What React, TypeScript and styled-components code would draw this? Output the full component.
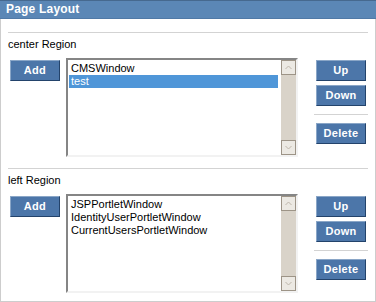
import React from "react";
import styled, { createGlobalStyle } from "styled-components";

const GlobalStyle = createGlobalStyle`
  html, body { margin: 0; padding: 0; background: #ffffff; }
  body { font-family: "Liberation Sans", Arial, sans-serif; }
  * { box-sizing: border-box; }
`;

const Panel = styled.div`
  width: 376px;
  height: 302px;
  display: flex;
  flex-direction: column;
  background: #ffffff;
`;

const Header = styled.div`
  height: 19px;
  flex: none;
  background: #5b87b6;
  border-top: 1px solid #46698f;
  border-bottom: 1px solid #5079a6;
  padding-left: 6px;
  color: #ffffff;
  font-size: 12px;
  font-weight: bold;
  line-height: 17px;
  letter-spacing: 0.2px;
`;

const Body = styled.div`
  flex: 1;
  border: 1px solid #cdcdcd;
  border-top: none;
  padding: 13px 7px 0 7px;
  display: flex;
  flex-direction: column;
`;

const Section = styled.div`
  display: flex;
  flex-direction: column;
  & + & {
    margin-top: 11px;
  }
`;

const Rule = styled.div<{ $gap?: number }>`
  height: 1px;
  background: #d3d3d3;
  margin: ${(p) => (p.$gap ? `${p.$gap}px 0` : "0")};
`;

const RegionTitle = styled.div`
  margin-top: 4px;
  height: 14px;
  font-size: 11px;
  line-height: 14px;
  color: #000000;
`;

const Row = styled.div`
  margin-top: 7px;
  display: flex;
  align-items: flex-start;
`;

const LeftCol = styled.div`
  width: 52px;
  margin-right: 6px;
  padding: 2px 0 0 2px;
`;

const RightCol = styled.div`
  width: 54px;
  margin-left: 16px;
  padding-top: 2px;
  display: flex;
  flex-direction: column;
  align-items: center;
`;

const ActionButton = styled.button<{ $top?: number }>`
  width: 50px;
  height: 21px;
  margin: ${(p) => p.$top ?? 0}px 0 0 0;
  padding: 0;
  background: #4c76a9;
  border-style: solid;
  border-width: 1px;
  border-color: #8aa6c7 #23436b #23436b #8aa6c7;
  color: #ffffff;
  font-family: "Liberation Sans", Arial, sans-serif;
  font-size: 11px;
  font-weight: bold;
  line-height: 19px;
  letter-spacing: 0.3px;
  text-align: center;
  cursor: pointer;
`;

const FullRule = styled(Rule)`
  align-self: stretch;
`;

const ListBox = styled.div`
  width: 232px;
  height: 99px;
  border-style: solid;
  border-width: 2px;
  border-color: #858585 #f2f2f2 #f2f2f2 #858585;
  display: flex;
  background: #ffffff;
`;

const Options = styled.div`
  flex: 1;
  padding: 2px 3px 0 1px;
  display: flex;
  flex-direction: column;
`;

const Option = styled.div<{ $selected?: boolean }>`
  height: 13px;
  line-height: 13px;
  padding-left: 2px;
  font-size: 11px;
  white-space: nowrap;
  overflow: hidden;
  background: ${(p) => (p.$selected ? "#4f96d8" : "transparent")};
  color: ${(p) => (p.$selected ? "#ffffff" : "#000000")};
`;

const ScrollBar = styled.div`
  width: 15px;
  display: flex;
  flex-direction: column;
  background: #d9d3c9;
`;

const ScrollTrack = styled.div`
  flex: 1;
`;

const ScrollButton = styled.div`
  width: 15px;
  height: 15px;
  border: 1px solid #9d9487;
  background: #ece9e3;
  display: flex;
  align-items: center;
  justify-content: center;
`;

const Arrow = ({ down }: { down?: boolean }) => (
  <svg width="7" height="5" viewBox="0 0 7 5">
    <polyline
      points={down ? "0.5,1 3.5,4 6.5,1" : "0.5,4 3.5,1 6.5,4"}
      fill="none"
      stroke="#bdb5aa"
      strokeWidth="1"
    />
  </svg>
);

type RegionProps = {
  title: string;
  items: string[];
  selected?: number;
};

const Region = ({ title, items, selected }: RegionProps) => (
  <Section>
    <Rule />
    <RegionTitle>{title}</RegionTitle>
    <Row>
      <LeftCol>
        <ActionButton>Add</ActionButton>
      </LeftCol>
      <ListBox>
        <Options>
          {items.map((it, i) => (
            <Option key={it} $selected={i === selected}>
              {it}
            </Option>
          ))}
        </Options>
        <ScrollBar>
          <ScrollButton>
            <Arrow />
          </ScrollButton>
          <ScrollTrack />
          <ScrollButton>
            <Arrow down />
          </ScrollButton>
        </ScrollBar>
      </ListBox>
      <RightCol>
        <ActionButton>Up</ActionButton>
        <ActionButton $top={4}>Down</ActionButton>
        <FullRule $gap={8} />
        <ActionButton>Delete</ActionButton>
      </RightCol>
    </Row>
  </Section>
);

export default function App() {
  return (
    <>
      <GlobalStyle />
      <Panel>
        <Header>Page Layout</Header>
        <Body>
          <Region title="center Region" items={["CMSWindow", "test"]} selected={1} />
          <Region
            title="left Region"
            items={["JSPPortletWindow", "IdentityUserPortletWindow", "CurrentUsersPortletWindow"]}
          />
        </Body>
      </Panel>
    </>
  );
}
